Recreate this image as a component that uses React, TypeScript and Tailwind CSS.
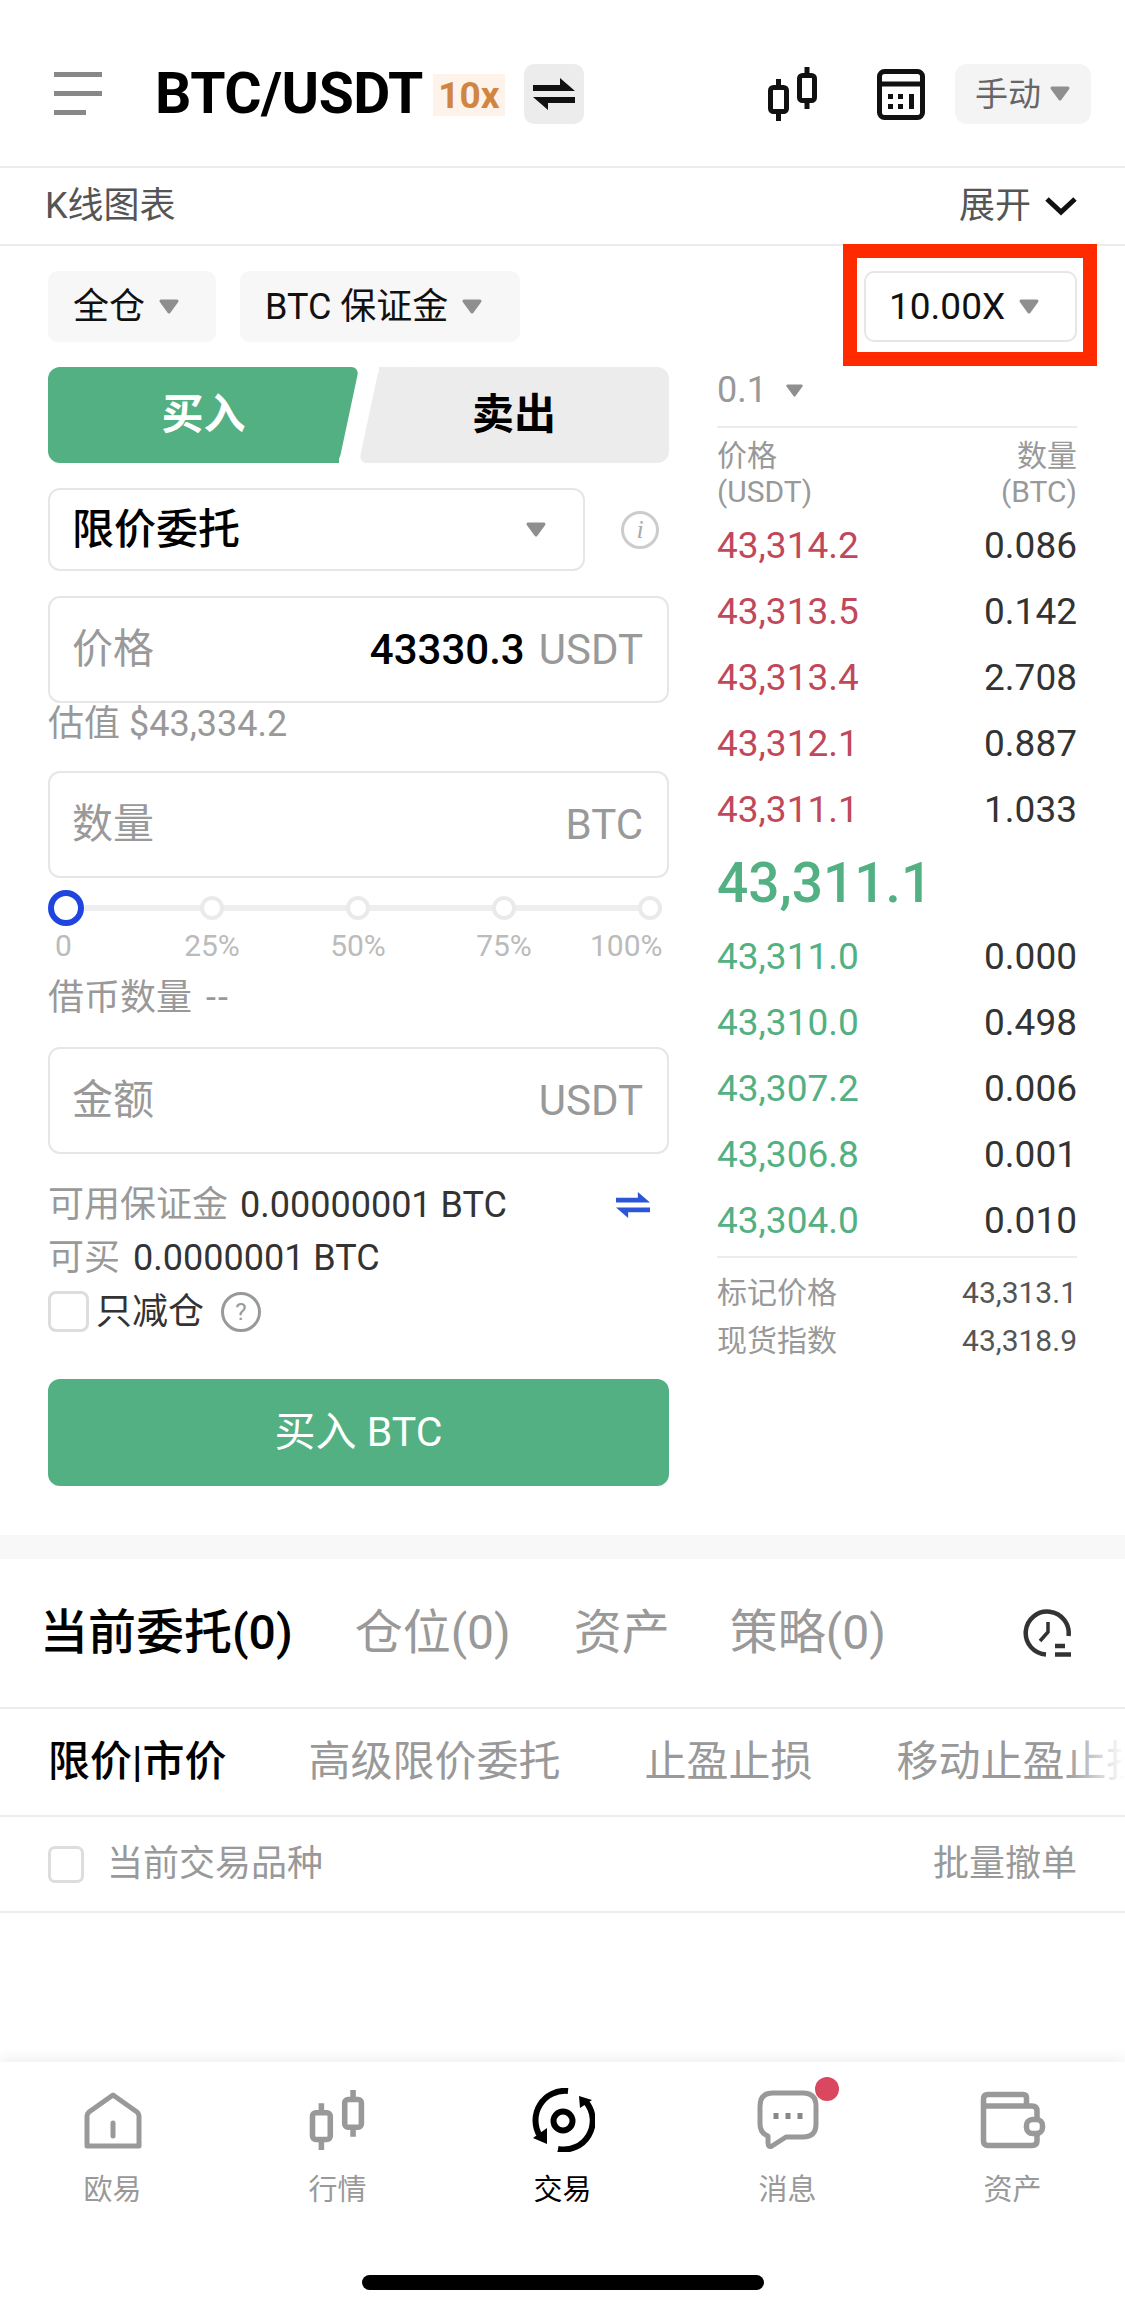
import React from 'react';

const asks = [
  ['43,314.2', '0.086'],
  ['43,313.5', '0.142'],
  ['43,313.4', '2.708'],
  ['43,312.1', '0.887'],
  ['43,311.1', '1.033'],
];

const bids = [
  ['43,311.0', '0.000'],
  ['43,310.0', '0.498'],
  ['43,307.2', '0.006'],
  ['43,306.8', '0.001'],
  ['43,304.0', '0.010'],
];

function Caret({ className = '' }: { className?: string }): JSX.Element {
  return (
    <svg width="22" height="16" viewBox="0 0 22 16" className={`shrink-0 ${className}`}>
      <path
        d="M3 2 H19 L11 13 Z"
        fill="#8f8f8f"
        stroke="#8f8f8f"
        strokeWidth="3"
        strokeLinejoin="round"
      />
    </svg>
  );
}

function SwapIcon({ color, width, height }: { color: string; width: number; height: number }): JSX.Element {
  return (
    <svg width={width} height={height} viewBox="0 0 42 32">
      <polygon points="0,7 27,7 27,0 42,13 0,13" fill={color} />
      <polygon points="42,19 0,19 15,32 15,25 42,25" fill={color} />
    </svg>
  );
}

function CandleIcon({ color, width, height }: { color: string; width: number; height: number }): JSX.Element {
  return (
    <svg width={width} height={height} viewBox="0 0 50 54" fill="none" stroke={color} strokeWidth="5">
      <rect x="2.5" y="20.5" width="16" height="24" rx="3" />
      <path d="M10.5 12 V20 M10.5 45 V54" />
      <rect x="31.5" y="8.5" width="15" height="25" rx="3" />
      <path d="M39 0 V8 M39 34 V42" />
    </svg>
  );
}

function CalcIcon(): JSX.Element {
  return (
    <svg width="48" height="51" viewBox="0 0 48 51" fill="none">
      <rect x="2.5" y="2.5" width="43" height="46" rx="5" stroke="#111" strokeWidth="5" />
      <path d="M3 15 H45" stroke="#111" strokeWidth="5" />
      <rect x="11" y="25" width="5" height="5" fill="#111" />
      <rect x="21" y="25" width="5" height="5" fill="#111" />
      <rect x="11" y="35" width="5" height="5" fill="#111" />
      <rect x="21" y="35" width="5" height="5" fill="#111" />
      <rect x="32" y="25" width="5" height="15" fill="#111" />
    </svg>
  );
}

function HistoryIcon(): JSX.Element {
  return (
    <svg width="50" height="50" viewBox="12 9 50 50" fill="none" stroke="#333">
      <path d="M36 55.5 A21.5 21.5 0 1 1 58.5 37" strokeWidth="4.5" />
      <path d="M38 23 V33 L30 42" strokeWidth="3.5" />
      <path d="M45 47 H55 M45 55.5 H61" strokeWidth="4.5" />
    </svg>
  );
}

function HomeIcon(): JSX.Element {
  return (
    <svg width="58" height="57" viewBox="0 0 58 57" fill="none" stroke="#999" strokeWidth="5">
      <path d="M3 54 V24 Q3 22 5 20 L29 3 L53 20 Q55 22 55 24 V54 Z" strokeLinejoin="round" />
      <path d="M29 31 V44" strokeLinecap="round" />
    </svg>
  );
}

function TradeIcon(): JSX.Element {
  return (
    <svg width="64" height="64" viewBox="9 10 64 64" fill="none" stroke="#000">
      <circle cx="41" cy="43" r="9.5" strokeWidth="6" />
      <path d="M46 13 A29.5 29.5 0 0 0 18 58" strokeWidth="6" />
      <polygon points="11,60 25,50 25,66" fill="#000" stroke="none" />
      <path d="M36 71 A29 29 0 0 0 64 24" strokeWidth="6" />
      <polygon points="57,18 70,22 58,30" fill="#000" stroke="none" />
    </svg>
  );
}

function MessageIcon(): JSX.Element {
  return (
    <svg width="62" height="60" viewBox="0 0 62 60" fill="none" stroke="#999" strokeWidth="5">
      <path
        d="M16 3 H46 Q59 3 59 16 V34 Q59 47 46 47 H29 L15 56 Q11 58 11 53 V46 Q3 43 3 34 V16 Q3 3 16 3 Z"
        strokeLinejoin="round"
      />
      <path d="M19 23 V29 M31 23 V29 M43 23 V29" stroke="#888" strokeWidth="5" />
    </svg>
  );
}

function WalletIcon(): JSX.Element {
  return (
    <svg width="66" height="58" viewBox="10 12 66 58" fill="none" stroke="#999" strokeWidth="5.5">
      <path d="M13.5 62 V20 Q13.5 15.5 18 15.5 H53 Q56.5 15.5 56.5 19 V26" />
      <path d="M13.5 27 H62 Q67 27 67 32 V40" />
      <path d="M13.5 62 Q13.5 66.5 18 66.5 H62 Q67 66.5 67 62 V55" />
      <rect x="56.5" y="40.5" width="16" height="14" rx="6" />
    </svg>
  );
}

function NavItem({
  icon,
  label,
  active,
  badge,
}: {
  icon: React.ReactNode;
  label: string;
  active?: boolean;
  badge?: boolean;
}): JSX.Element {
  return (
    <div className="flex w-[225px] flex-col items-center">
      <div className="relative flex h-[64px] items-center justify-center">
        {icon}
        {badge && (
          <span className="absolute right-[-20px] top-[-11px] h-[24px] w-[24px] rounded-full bg-[#d9485f]" />
        )}
      </div>
      <span className={`mt-[18px] text-[29px] leading-[40px] ${active ? 'text-black' : 'text-[#999]'}`}>
        {label}
      </span>
    </div>
  );
}

function Field({
  label,
  value,
  unit,
}: {
  label: string;
  value?: string;
  unit: string;
}): JSX.Element {
  return (
    <div className="flex h-[107px] items-center rounded-[12px] border-2 border-[#e6e6e6] pl-[22px] pr-[24px] text-[42px] text-[#999]">
      <span className="text-[41px] leading-none">{label}</span>
      {value && <span className="ml-auto text-[42px] font-medium leading-none text-black">{value}</span>}
      <span className={`leading-none ${value ? 'ml-[14px]' : 'ml-auto'}`}>{unit}</span>
    </div>
  );
}

function BookRow({ price, size, color }: { price: string; size: string; color: string }): JSX.Element {
  return (
    <div className="flex h-[66px] items-center justify-between text-[37px]">
      <span className={color}>{price}</span>
      <span className="text-[#333]">{size}</span>
    </div>
  );
}

function App(): JSX.Element {
  return (
    <div className="relative flex h-[2314px] w-[1125px] flex-col overflow-hidden bg-white font-['Roboto','Noto_Sans_CJK_SC',sans-serif]">
      {/* top bar */}
      <div className="flex h-[168px] items-start border-b-2 border-[#ececec] pl-[54px] pr-[34px] pt-[64px]">
        <div className="mr-[53px] mt-[8px] flex w-[48px] flex-col gap-[14px]">
          <div className="h-[5px] w-[48px] bg-[#888]" />
          <div className="h-[5px] w-[48px] bg-[#888]" />
          <div className="h-[5px] w-[32px] bg-[#888]" />
        </div>
        <span className="text-[57px] font-bold leading-[60px] tracking-[-0.5px] text-black">BTC/USDT</span>
        <span className="ml-[10px] mt-[10px] flex h-[42px] w-[72px] items-center justify-center bg-[#fdf3ea] text-[37px] font-bold leading-none text-[#d08540]">
          10x
        </span>
        <div className="ml-[19px] flex h-[60px] w-[60px] items-center justify-center rounded-[10px] bg-[#ececec]">
          <SwapIcon color="#111" width={42} height={32} />
        </div>
        <div className="ml-auto mt-[3px]">
          <CandleIcon color="#111" width={50} height={54} />
        </div>
        <div className="ml-[59px] mt-[5px]">
          <CalcIcon />
        </div>
        <div className="ml-[30px] flex h-[60px] w-[136px] items-center justify-center gap-[8px] rounded-[12px] bg-[#f4f4f4] text-[33px] leading-none text-[#666]">
          手动
          <Caret />
        </div>
      </div>

      <div className="flex h-[78px] items-center justify-between border-b-2 border-[#ececec] pl-[45px] pr-[47px] text-[36px] leading-none text-[#555]">
        <span>K线图表</span>
        <div className="flex items-center gap-[13px]">
          <span>展开</span>
          <svg width="34" height="20" viewBox="0 0 34 20" fill="none">
            <path d="M3 3 L17 16 L31 3" stroke="#111" strokeWidth="5" />
          </svg>
        </div>
      </div>

      {/* margin mode and leverage */}
      <div className="flex h-[121px] items-start pl-[48px] pr-[48px] pt-[25px] text-[36px] leading-none text-[#111]">
        <div className="flex h-[71px] w-[168px] items-center gap-[13px] rounded-[10px] bg-[#f7f7f7] pl-[25px]">
          全仓
          <Caret />
        </div>
        <div className="ml-[24px] flex h-[71px] w-[280px] items-center gap-[13px] rounded-[10px] bg-[#f7f7f7] pl-[25px]">
          BTC 保证金
          <Caret />
        </div>
        <div className="ml-auto flex h-[71px] w-[213px] items-center gap-[13px] rounded-[10px] border-2 border-[#e6e6e6] pl-[23px] text-[37px]">
          10.00X
          <Caret />
        </div>
      </div>

      {/* order form and book */}
      <div className="flex justify-between pb-[49px] pl-[48px] pr-[48px]">
        <div className="w-[621px]">
          <div className="flex h-[96px] text-[42px] font-bold leading-none">
            <div className="relative flex w-[291px] items-center justify-center rounded-l-[12px] bg-[#52b083] text-white">
              <div className="absolute right-[-10px] top-0 h-full w-[40px] -skew-x-[12deg] rounded-[8px] bg-[#52b083]" />
              <span className="relative ml-[20px]">买入</span>
            </div>
            <div className="relative ml-[40px] flex flex-1 items-center justify-center rounded-r-[12px] bg-[#ececec] text-black">
              <div className="absolute left-[-10px] top-0 h-full w-[40px] -skew-x-[12deg] rounded-[8px] bg-[#ececec]" />
              <span className="relative mr-[20px]">卖出</span>
            </div>
          </div>

          <div className="mt-[25px] flex items-center">
            <div className="flex h-[83px] w-[537px] items-center justify-between rounded-[12px] border-2 border-[#e6e6e6] pl-[22px] pr-[36px] text-[42px] font-medium leading-none text-black">
              限价委托
              <Caret />
            </div>
            <div className="ml-[36px] flex h-[38px] w-[38px] items-center justify-center rounded-full border-[3px] border-[#ccc] font-['Liberation_Serif',serif] text-[26px] italic leading-none text-[#aaa]">
              i
            </div>
          </div>

          <div className="mt-[25px]">
            <Field label="价格" value="43330.3" unit="USDT" />
          </div>
          <div className="flex h-[42px] items-center text-[36px] leading-none text-[#999]">估值 $43,334.2</div>

          <div className="mt-[26px]">
            <Field label="数量" unit="BTC" />
          </div>

          {/* slider */}
          <div className="relative mt-[12px] flex h-[36px] items-center">
            <div className="absolute left-[18px] right-[7px] top-[15px] h-[6px] bg-[#eeeeee]" />
            <div className="relative mr-[116px] h-[36px] w-[36px] rounded-full border-[6px] border-[#1f45e0] bg-white" />
            <div className="relative flex gap-[122px]">
              <div className="h-[24px] w-[24px] rounded-full border-[4px] border-[#eaeaea] bg-white" />
              <div className="h-[24px] w-[24px] rounded-full border-[4px] border-[#eaeaea] bg-white" />
              <div className="h-[24px] w-[24px] rounded-full border-[4px] border-[#eaeaea] bg-white" />
              <div className="h-[24px] w-[24px] rounded-full border-[4px] border-[#eaeaea] bg-white" />
            </div>
          </div>
          <div className="mt-[2px] flex h-[36px] items-center text-[30px] leading-none text-[#bbb]">
            <span className="ml-[7px] w-[84px]">0</span>
            <span className="w-[146px] text-center">25%</span>
            <span className="w-[146px] text-center">50%</span>
            <span className="w-[146px] text-center">75%</span>
            <span className="ml-[13px]">100%</span>
          </div>

          <div className="mt-[16px] flex h-[36px] items-center text-[36px] leading-none text-[#999]">
            借币数量
            <span className="ml-[14px] tracking-[2px]">--</span>
          </div>

          <div className="mt-[31px]">
            <Field label="金额" unit="USDT" />
          </div>

          <div className="mt-[24px] flex h-[53px] items-center text-[36px] leading-none">
            <span className="text-[#999]">可用保证金</span>
            <span className="ml-[12px] text-[#333]">0.00000001 BTC</span>
            <span className="ml-auto mr-[19px]">
              <SwapIcon color="#2d55d8" width={34} height={30} />
            </span>
          </div>
          <div className="flex h-[53px] items-center text-[36px] leading-none">
            <span className="text-[#999]">可买</span>
            <span className="ml-[13px] text-[#333]">0.0000001 BTC</span>
          </div>
          <div className="flex h-[54px] items-center pt-[1px] text-[36px] leading-none text-[#333]">
            <div className="h-[41px] w-[41px] rounded-[8px] border-[3px] border-[#dddddd]" />
            <span className="ml-[7px]">只减仓</span>
            <div className="ml-[17px] flex h-[40px] w-[40px] items-center justify-center rounded-full border-[3px] border-[#999] text-[24px] leading-none text-[#999]">
              ?
            </div>
          </div>

          <div className="mt-[41px] flex h-[107px] items-center justify-center rounded-[12px] bg-[#52b083] text-[41px] leading-none text-white">
            买入 BTC
          </div>
        </div>

        <div className="w-[360px]">
          <div className="flex h-[61px] items-start border-b-2 border-[#ececec] pt-[5px] text-[36px] leading-[36px] text-[#999]">
            0.1
            <Caret className="ml-[18px] mt-[12px] h-[14px] w-[19px]" />
          </div>
          <div className="flex justify-between pt-[10px] text-[30px] leading-[36px] text-[#999]">
            <div>
              价格
              <br />
              (USDT)
            </div>
            <div className="text-right">
              数量
              <br />
              (BTC)
            </div>
          </div>
          <div className="mt-[3px]">
            {asks.map(([price, size]) => (
              <BookRow key={price} price={price} size={size} color="text-[#c0485a]" />
            ))}
          </div>
          <div className="flex h-[81px] items-center text-[55px] font-medium leading-none text-[#52b083]">43,311.1</div>
          <div>
            {bids.map(([price, size]) => (
              <BookRow key={price} price={price} size={size} color="text-[#52b083]" />
            ))}
          </div>
          <div className="mt-[2px] border-t-2 border-[#ececec] pt-[11px] text-[30px] leading-[48px]">
            <div className="flex justify-between">
              <span className="text-[#999]">标记价格</span>
              <span className="text-[#555]">43,313.1</span>
            </div>
            <div className="flex justify-between">
              <span className="text-[#999]">现货指数</span>
              <span className="text-[#555]">43,318.9</span>
            </div>
          </div>
        </div>
      </div>

      <div className="h-[24px] bg-[#f8f8f8]" />

      {/* orders */}
      <div className="flex h-[150px] items-center border-b-2 border-[#ececec] pl-[40px] pr-[53px] text-[48px] leading-none text-[#999]">
        <span className="font-medium text-black">当前委托(0)</span>
        <span className="ml-[62px]">仓位(0)</span>
        <span className="ml-[63px]">资产</span>
        <span className="ml-[60px]">策略(0)</span>
        <span className="ml-auto">
          <HistoryIcon />
        </span>
      </div>
      <div className="relative flex h-[108px] items-center overflow-hidden whitespace-nowrap border-b-2 border-[#ececec] pl-[48px] text-[42px] leading-none text-[#999]">
        <span className="font-medium text-black">限价|市价</span>
        <span className="ml-[82px]">高级限价委托</span>
        <span className="ml-[84px]">止盈止损</span>
        <span className="ml-[84px]">移动止盈止损</span>
        <div className="absolute bottom-0 right-0 top-0 w-[60px] bg-linear-to-l from-white to-transparent" />
      </div>
      <div className="flex h-[96px] items-center justify-between border-b-2 border-[#ececec] pl-[48px] pr-[48px] text-[36px] leading-none text-[#999]">
        <div className="flex items-center">
          <div className="h-[37px] w-[36px] rounded-[7px] border-[3px] border-[#dddddd]" />
          <span className="ml-[23px]">当前交易品种</span>
        </div>
        <span>批量撤单</span>
      </div>

      {/* bottom nav */}
      <div className="mt-auto h-[252px] bg-white pt-[26px] shadow-[0_-6px_12px_rgba(0,0,0,0.05)]">
        <div className="flex justify-center">
          <NavItem icon={<HomeIcon />} label="欧易" />
          <NavItem icon={<CandleIcon color="#999" width={57} height={60} />} label="行情" />
          <NavItem icon={<TradeIcon />} label="交易" active />
          <NavItem icon={<MessageIcon />} label="消息" badge />
          <NavItem icon={<WalletIcon />} label="资产" />
        </div>
        <div className="mx-auto mt-[65px] h-[15px] w-[402px] rounded-full bg-black" />
      </div>

      {/* red annotation over the leverage control */}
      <div className="absolute left-[843px] top-[244px] h-[122px] w-[254px] border-[14px] border-[#ff2a00]" />
    </div>
  );
}

export default App;
